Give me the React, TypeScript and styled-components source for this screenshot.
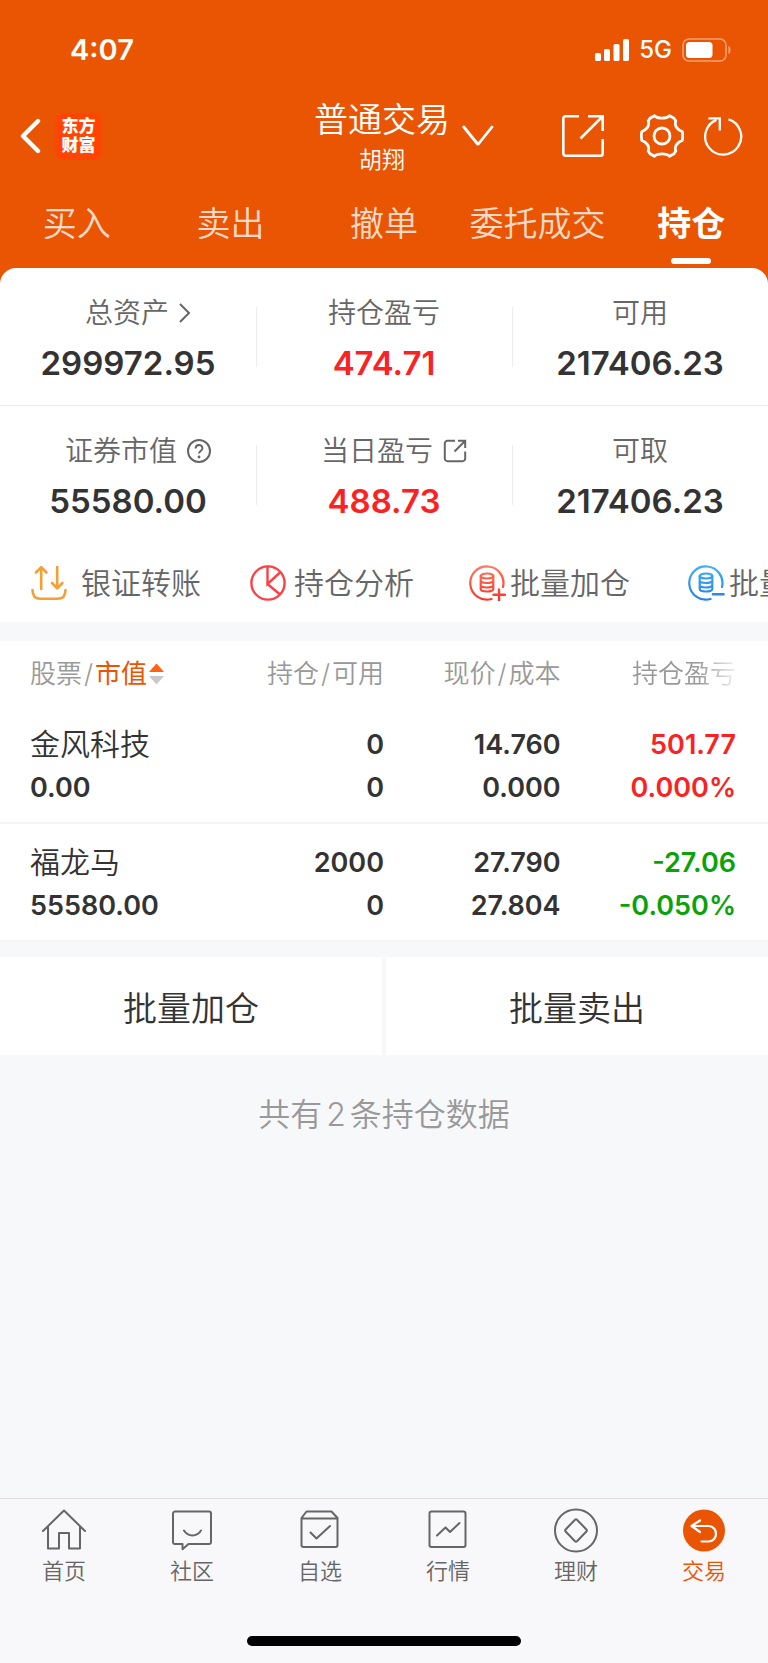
import React from 'react';
import styled, { createGlobalStyle, css } from 'styled-components';

const color = {
  brand: '#ea5504',
  dark: '#333333',
  label: '#666666',
  muted: '#999999',
  up: '#fb2223',
  down: '#09a309',
  page: '#f7f8fa',
  line: '#f4f4f5',
};

const GlobalStyle = createGlobalStyle`
  * { box-sizing: border-box; }
  body {
    margin: 0;
    background: ${color.page};
    color: ${color.dark};
    font-family: Inter, 'Noto Sans CJK SC', sans-serif;
    font-weight: 350;
  }
  button {
    margin: 0;
    padding: 0;
    border: 0;
    background: none;
    color: inherit;
    font: inherit;
    cursor: pointer;
  }
  a { color: inherit; text-decoration: none; }
  svg { display: block; flex: none; fill: none; stroke: currentColor; }
`;

const Page = styled.div`
  display: flex;
  flex-direction: column;
  min-height: 100vh;
`;

/* ---------- header ---------- */

const Header = styled.header`
  background: ${color.brand};
  color: #fff;
  padding-bottom: 16px;
  margin-bottom: -16px;
`;

const StatusBar = styled.div`
  display: flex;
  align-items: center;
  justify-content: space-between;
  height: 96px;
  padding: 3px 36px 0 70px;
`;

const Clock = styled.time`
  font-size: 29px;
  font-weight: 600;
  line-height: 36px;
`;

const StatusIcons = styled.div`
  display: flex;
  align-items: center;
  gap: 10px;
  font-size: 24px;
  font-weight: 500;
  line-height: 32px;
`;

const TitleBar = styled.div`
  display: grid;
  grid-template-columns: 1fr auto 1fr;
  align-items: center;
  height: 80px;
  padding: 0 24px 0 20px;
`;

const TitleSide = styled.div`
  display: flex;
  align-items: center;
`;

const Logo = styled.span`
  display: grid;
  place-content: center;
  width: 47px;
  height: 47px;
  margin-left: 14px;
  border-radius: 9px;
  background: #ff4404;
  font-size: 17px;
  font-weight: 900;
  line-height: 19px;
`;

const Account = styled.div`
  text-align: center;
`;

const AccountType = styled.h1`
  margin: 0;
  font-size: 34px;
  font-weight: inherit;
  line-height: 48px;
`;

const AccountName = styled.div`
  font-size: 23px;
  line-height: 32px;
`;

const Tools = styled.div`
  display: flex;
  align-items: center;
  margin-left: auto;
`;

const ToolButton = styled.button<{ $gap?: number }>`
  margin-left: ${({ $gap = 0 }) => $gap}px;
`;

const Tabs = styled.nav`
  display: grid;
  grid-template-columns: repeat(5, 1fr);
  height: 92px;
`;

const Tab = styled.button<{ $active?: boolean }>`
  position: relative;
  padding-top: 4px;
  font-size: 34px;
  line-height: 44px;
  white-space: nowrap;
  color: rgba(255, 255, 255, 0.8);
  ${({ $active }) =>
    $active &&
    css`
      color: #fff;
      font-weight: 700;
      &::after {
        content: '';
        position: absolute;
        bottom: 4px;
        left: 50%;
        width: 40px;
        height: 6px;
        margin-left: -20px;
        border-radius: 3px;
        background: #fff;
      }
    `}
`;

/* ---------- assets ---------- */

const AssetCard = styled.section`
  position: relative;
  overflow: hidden;
  border-radius: 16px 16px 0 0;
  background: #fff;
`;

const AssetRow = styled.dl`
  display: grid;
  grid-template-columns: repeat(3, 1fr);
  margin: 0;
  padding: 23px 0 20px;
  & + & {
    border-top: 1px solid #ededee;
  }
`;

const Asset = styled.div`
  position: relative;
  text-align: center;
  & + &::before {
    content: '';
    position: absolute;
    left: 0;
    top: 16px;
    height: 60px;
    border-left: 1px solid #ededee;
  }
`;

const AssetLabel = styled.dt<{ $icon?: boolean }>`
  display: flex;
  align-items: center;
  justify-content: center;
  gap: 10px;
  padding-left: ${({ $icon }) => ($icon ? 20 : 0)}px;
  color: ${color.label};
  font-size: 28px;
  line-height: 44px;
`;

const AssetValue = styled.dd<{ $up?: boolean }>`
  margin: 6px 0 0;
  color: ${({ $up }) => ($up ? color.up : color.dark)};
  font-size: 33px;
  font-weight: 600;
  line-height: 44px;
`;

const Actions = styled.div`
  display: flex;
  height: 79px;
  padding-left: 31px;
  overflow: hidden;
`;

const Action = styled.button<{ $gap: number }>`
  flex: 0 0 219px;
  display: flex;
  align-items: center;
  gap: ${({ $gap }) => $gap}px;
  color: ${color.label};
  font-size: 30px;
  white-space: nowrap;
`;

const ActionLabel = styled.span`
  padding-bottom: 3px;
`;

/* ---------- holdings ---------- */

const Holdings = styled.table`
  width: 100%;
  margin-top: 19px;
  border-collapse: collapse;
  table-layout: fixed;
  background: #fff;
`;

const HeadCell = styled.th<{ $width: string; $fade?: boolean }>`
  width: ${({ $width }) => $width};
  height: 65px;
  padding: 0;
  color: ${color.muted};
  font-size: 26px;
  font-weight: inherit;
  line-height: 40px;
  text-align: right;
  white-space: nowrap;
  &:first-child { padding-left: 30px; text-align: left; }
  &:last-child { padding-right: 32px; }
  ${({ $fade }) =>
    $fade &&
    css`
      -webkit-mask-image: linear-gradient(to right, #000 66%, transparent 88%);
      mask-image: linear-gradient(to right, #000 66%, transparent 88%);
    `}
`;

const Slash = styled.span`
  margin: 0 2px;
`;

const SortButton = styled.button`
  display: inline-flex;
  align-items: center;
  gap: 2px;
  color: ${color.brand};
  font-weight: 400;
`;

const HoldingRow = styled.tr`
  border-bottom: 2px solid ${color.line};
`;

const Cell = styled.td<{ $tone?: 'up' | 'down' }>`
  padding: 17px 0 13px;
  color: ${({ $tone }) => ($tone ? color[$tone] : color.dark)};
  font-size: 27px;
  font-weight: 600;
  line-height: 43px;
  text-align: right;
  &:first-child { padding-left: 30px; text-align: left; }
  &:last-child { padding-right: 32px; }
`;

const Line = styled.div`
  height: 43px;
`;

const StockName = styled.div`
  height: 43px;
  font-size: 30px;
  font-weight: 350;
`;

const BatchBar = styled.div`
  display: grid;
  grid-template-columns: 1fr 1fr;
  gap: 4px;
  margin-top: 15px;
`;

const BatchButton = styled.button`
  height: 98px;
  background: #fff;
  font-size: 34px;
`;

const Summary = styled.p`
  margin: 38px 0;
  color: ${color.muted};
  font-size: 32px;
  line-height: 44px;
  text-align: center;
`;

const Count = styled.span`
  margin: 0 4px;
`;

/* ---------- bottom navigation ---------- */

const BottomBar = styled.footer`
  margin-top: auto;
  padding-bottom: 17px;
  border-top: 1px solid #dedee0;
  background: #f8f8fa;
`;

const BottomNav = styled.nav`
  display: grid;
  grid-template-columns: repeat(6, 1fr);
  height: 137px;
  padding-top: 9px;
`;

const NavItem = styled.a<{ $active?: boolean }>`
  display: flex;
  flex-direction: column;
  align-items: center;
  color: ${({ $active }) => ($active ? color.brand : color.label)};
  font-size: 22px;
  line-height: 34px;
`;

const HomeIndicator = styled.div`
  width: 274px;
  height: 10px;
  margin: 0 auto;
  border-radius: 5px;
  background: #000;
`;

/* ---------- icons ---------- */

const SignalIcon = () => (
  <svg width="34" height="22" viewBox="0 0 34 22" aria-hidden="true" style={{ fill: '#fff', stroke: 'none' }}>
    <rect x="0" y="14" width="6" height="8" rx="1.6" />
    <rect x="9" y="10" width="6" height="12" rx="1.6" />
    <rect x="18.5" y="5" width="6" height="17" rx="1.6" />
    <rect x="28" y="0" width="6" height="22" rx="1.6" />
  </svg>
);

const BatteryIcon = () => (
  <svg width="50" height="24" viewBox="0 0 50 24" aria-hidden="true">
    <rect x="1" y="1" width="43" height="22" rx="6" stroke="#fff" strokeOpacity="0.45" strokeWidth="1.6" />
    <rect x="4" y="4" width="26.5" height="16" rx="3.5" fill="#fff" stroke="none" />
    <path d="M46.5 8c2.6 1 2.6 7 0 8z" fill="#fff" fillOpacity="0.5" stroke="none" />
  </svg>
);

const BackIcon = () => (
  <svg width="21" height="36" viewBox="0 0 21 36" strokeWidth="4.4" strokeLinecap="round" strokeLinejoin="round">
    <path d="M18 3 3 18l15 15" />
  </svg>
);

const DownIcon = () => (
  <svg width="32" height="22" viewBox="0 0 32 22" strokeWidth="2.8" strokeLinecap="round">
    <path d="M1.8 2 16 19.5 30 2" strokeLinejoin="bevel" />
  </svg>
);

const ShareIcon = () => (
  <svg width="42" height="42" viewBox="0 0 42 42" strokeWidth="2.6">
    <path d="M17 1.3H3.5a2.2 2.2 0 0 0-2.2 2.2v35a2.2 2.2 0 0 0 2.2 2.2h35a2.2 2.2 0 0 0 2.2-2.2V24" />
    <path d="M26 1.3h14.7V16M40 2 18.5 23.5" />
  </svg>
);

const GearIcon = () => (
  <svg width="44" height="44" viewBox="0 0 44 44" strokeWidth="2.8" strokeLinejoin="round">
    <path d="M14.500 1.800C17.500 5 26.500 5 29.500 1.800L34 4.300L35.800 7C34 11.500 37.500 16 42.200 17.500Q43.200 22 42.200 26.500C37.500 28 34 32.500 35.800 37L34 39.700L29.500 42.200C26.500 39 17.500 39 14.500 42.200L10 39.700L8.200 37C10 32.500 6.500 28 1.800 26.500Q.800 22 1.800 17.500C6.500 16 10 11.500 8.200 7L10 4.300Z" />
    <circle cx="22" cy="22" r="8" />
  </svg>
);

const RefreshIcon = () => (
  <svg width="40" height="40" viewBox="0 0 40 40" strokeWidth="2.3">
    <path d="M24.5 3.4A18 18 0 1 1 12.500 3.900" />
    <path d="M4.400 2.400h11.400v12.200" />
  </svg>
);

const ChevronIcon = () => (
  <svg width="12" height="20" viewBox="0 0 12 20" strokeWidth="2">
    <path d="m1 1 9 9-9 9" />
  </svg>
);

const HelpIcon = () => (
  <svg width="24" height="24" viewBox="0 0 24 24" strokeWidth="2">
    <circle cx="12" cy="12" r="11" />
    <path d="M8.600 9.600c0-4.600 6.800-4.600 6.800-.400 0 2.800-3.400 2.800-3.400 5.400" />
    <circle cx="12" cy="18" r="1.400" fill="currentColor" stroke="none" />
  </svg>
);

const OpenIcon = () => (
  <svg width="24" height="24" viewBox="0 0 24 24" strokeWidth="2">
    <path d="M12 1.800H4.500A2.700 2.700 0 0 0 1.800 4.500v15a2.700 2.700 0 0 0 2.700 2.700h15a2.700 2.700 0 0 0 2.700-2.700V12.500" />
    <path d="M15 1.800h7.200V9M22 2 11.500 12.500" />
  </svg>
);

const TransferIcon = () => (
  <svg width="36" height="36" viewBox="0 0 36 36" strokeWidth="2.600" strokeLinecap="round" strokeLinejoin="round" style={{ stroke: '#f4a035' }}>
    <path d="M10.200 24V2.500M5 7.500l5.200-5.400 5.200 5.400" />
    <path d="M26.200 2v21M21 18l5.200 5.400L31.400 18" />
    <path d="M1.500 25c0 6 3 8.800 8 8.800h17c5 0 8-2.800 8-8.800" />
  </svg>
);

const PieIcon = () => (
  <svg width="36" height="36" viewBox="0 0 36 36" strokeWidth="2.400" style={{ stroke: '#fb4145' }}>
    <circle cx="18" cy="18" r="16.600" />
    <path d="M17.500 1.500V19L30 7.500M17.500 19 30 29.500" />
  </svg>
);

const CoinsIcon = ({ from, to, minus }: { from: string; to: string; minus?: boolean }) => {
  const id = minus ? 'coinsMinus' : 'coinsPlus';
  return (
    <svg width="37" height="36" viewBox="0 0 37 36" strokeWidth="2.200" strokeLinecap="round" style={{ stroke: `url(#${id})` }}>
      <defs>
        <linearGradient id={id} gradientUnits="userSpaceOnUse" x1="0" y1="0" x2="0" y2="36">
          <stop offset="0" stopColor={from} />
          <stop offset="1" stopColor={to} />
        </linearGradient>
      </defs>
      <path d="M34 22A16.600 16.600 0 1 0 22.500 34" />
      <ellipse cx="18" cy="11" rx="6.300" ry="2.500" />
      <path d="M11.700 11v13c0 3.300 12.600 3.300 12.600 0V11M11.700 15.500c0 3.300 12.600 3.300 12.600 0M11.700 20c0 3.300 12.600 3.300 12.600 0" />
      {minus ? <path d="M25 29.300 35.500 29.200" strokeWidth="2.600" /> : <path d="M24.500 29.800l11.500-.100M30 24.500l.100 11" strokeWidth="2.400" />}
    </svg>
  );
};

const SortIcon = () => (
  <svg width="15" height="22" viewBox="0 0 15 22" style={{ stroke: 'none' }}>
    <path d="M0 9 7.500 0.500 15 9z" fill="#fa6414" />
    <path d="M0 13h15l-7.500 8.500z" fill="#c8c8c8" />
  </svg>
);

const NavIcon = ({ children }: { children: React.ReactNode }) => (
  <svg width="46" height="46" viewBox="0 0 46 46" strokeWidth="2" strokeLinecap="round" strokeLinejoin="round" aria-hidden="true">
    {children}
  </svg>
);

/* ---------- data ---------- */

const tabs = ['买入', '卖出', '撤单', '委托成交', '持仓'];

type AssetItem = { label: string; value: string; icon?: React.ReactNode; up?: boolean };

const assetRows: AssetItem[][] = [
  [
    { label: '总资产', value: '299972.95', icon: <ChevronIcon /> },
    { label: '持仓盈亏', value: '474.71', up: true },
    { label: '可用', value: '217406.23' },
  ],
  [
    { label: '证券市值', value: '55580.00', icon: <HelpIcon /> },
    { label: '当日盈亏', value: '488.73', icon: <OpenIcon />, up: true },
    { label: '可取', value: '217406.23' },
  ],
];

const actions = [
  { label: '银证转账', icon: <TransferIcon />, gap: 14 },
  { label: '持仓分析', icon: <PieIcon />, gap: 8 },
  { label: '批量加仓', icon: <CoinsIcon from="#ff7a5c" to="#f5352c" />, gap: 4 },
  { label: '批量卖出', icon: <CoinsIcon from="#3fb0fa" to="#2380e8" minus />, gap: 4 },
];

const holdings = [
  { name: '金风科技', value: '0.00', held: '0', usable: '0', price: '14.760', cost: '0.000', profit: '501.77', rate: '0.000%', tone: 'up' as const },
  { name: '福龙马', value: '55580.00', held: '2000', usable: '0', price: '27.790', cost: '27.804', profit: '-27.06', rate: '-0.050%', tone: 'down' as const },
];

const navItems = [
  {
    label: '首页',
    icon: <path d="M2 23 23 2.500 44 23M7 19v21.500h11V25h10v15.500h11V19" />,
  },
  {
    label: '社区',
    icon: <path d="M6 3.500h34a2 2 0 0 1 2 2V34a2 2 0 0 1-2 2H19.500l-6 5.200V36H6a2 2 0 0 1-2-2V5.500a2 2 0 0 1 2-2zM15 22.500c4 6.600 13 6.600 17 0" />,
  },
  {
    label: '自选',
    icon: <path d="M9.500 3.500h25l6 6.500v27a2 2 0 0 1-2 2H6.500a2 2 0 0 1-2-2V10zM4.500 10.500h36M13.500 24.500l6 6L33 18" />,
  },
  {
    label: '行情',
    icon: <path d="M6.500 3.500h32a2 2 0 0 1 2 2v31.500a2 2 0 0 1-2 2h-32a2 2 0 0 1-2-2V5.500a2 2 0 0 1 2-2zM12 27.500l8.500-8 4.500 4.500 9.500-9" />,
  },
  {
    label: '理财',
    icon: (
      <>
        <circle cx="23" cy="22.500" r="21" />
        <path d="M22 11.700 12.600 21.500a1.500 1.500 0 0 0 0 2L22 33.300a1.500 1.500 0 0 0 2 0l9.400-9.800a1.500 1.500 0 0 0 0-2L24 11.700a1.500 1.500 0 0 0-2 0z" />
      </>
    ),
  },
  {
    label: '交易',
    active: true,
    icon: (
      <>
        <circle cx="23" cy="22.500" r="21" fill={color.brand} stroke="none" />
        <path d="M19 12.500 10.500 18l8.500 6M11 18h16.500c10 0 10 15.500 0 15.500H20.500" stroke="#fff" strokeWidth="2.200" />
      </>
    ),
  },
];

export default function App() {
  return (
    <Page>
      <GlobalStyle />
      <Header>
        <StatusBar>
          <Clock>4:07</Clock>
          <StatusIcons>
            <SignalIcon />
            <span>5G</span>
            <BatteryIcon />
          </StatusIcons>
        </StatusBar>
        <TitleBar>
          <TitleSide>
            <button aria-label="返回"><BackIcon /></button>
            <Logo><span>东方</span><span>财富</span></Logo>
          </TitleSide>
          <Account>
            <AccountType>普通交易</AccountType>
            <AccountName>胡翔</AccountName>
          </Account>
          <TitleSide>
            <ToolButton $gap={12} aria-label="切换账户"><DownIcon /></ToolButton>
            <Tools>
              <ToolButton aria-label="分享"><ShareIcon /></ToolButton>
              <ToolButton $gap={36} aria-label="设置"><GearIcon /></ToolButton>
              <ToolButton $gap={20} aria-label="刷新"><RefreshIcon /></ToolButton>
            </Tools>
          </TitleSide>
        </TitleBar>
        <Tabs>
          {tabs.map((tab) => (
            <Tab key={tab} $active={tab === '持仓'}>{tab}</Tab>
          ))}
        </Tabs>
      </Header>

      <AssetCard>
        {assetRows.map((row, i) => (
          <AssetRow key={i}>
            {row.map((item) => (
              <Asset key={item.label}>
                <AssetLabel $icon={!!item.icon}>
                  {item.label}
                  {item.icon}
                </AssetLabel>
                <AssetValue $up={item.up}>{item.value}</AssetValue>
              </Asset>
            ))}
          </AssetRow>
        ))}
        <Actions>
          {actions.map((action) => (
            <Action key={action.label} $gap={action.gap}>
              {action.icon}
              <ActionLabel>{action.label}</ActionLabel>
            </Action>
          ))}
        </Actions>
      </AssetCard>

      <Holdings>
        <thead>
          <tr>
            <HeadCell $width="27%">
              股票<Slash>/</Slash>
              <SortButton>市值<SortIcon /></SortButton>
            </HeadCell>
            <HeadCell $width="23%">持仓<Slash>/</Slash>可用</HeadCell>
            <HeadCell $width="23%">现价<Slash>/</Slash>成本</HeadCell>
            <HeadCell $width="27%" $fade>持仓盈亏</HeadCell>
          </tr>
        </thead>
        <tbody>
          {holdings.map((h) => (
            <HoldingRow key={h.name}>
              <Cell>
                <StockName>{h.name}</StockName>
                <Line>{h.value}</Line>
              </Cell>
              <Cell><Line>{h.held}</Line><Line>{h.usable}</Line></Cell>
              <Cell><Line>{h.price}</Line><Line>{h.cost}</Line></Cell>
              <Cell $tone={h.tone}><Line>{h.profit}</Line><Line>{h.rate}</Line></Cell>
            </HoldingRow>
          ))}
        </tbody>
      </Holdings>

      <BatchBar>
        <BatchButton>批量加仓</BatchButton>
        <BatchButton>批量卖出</BatchButton>
      </BatchBar>
      <Summary>共有<Count>2</Count>条持仓数据</Summary>

      <BottomBar>
        <BottomNav>
          {navItems.map((item) => (
            <NavItem key={item.label} href="#" $active={item.active}>
              <NavIcon>{item.icon}</NavIcon>
              {item.label}
            </NavItem>
          ))}
        </BottomNav>
        <HomeIndicator />
      </BottomBar>
    </Page>
  );
}
